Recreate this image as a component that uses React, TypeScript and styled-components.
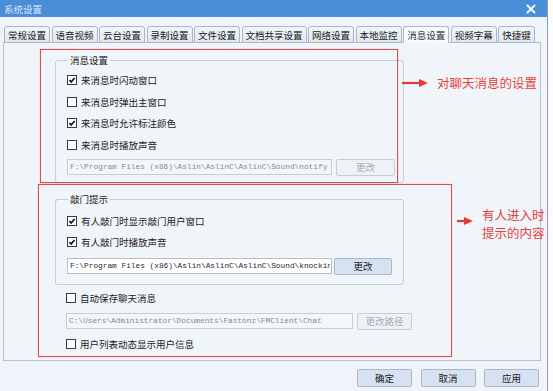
import React from 'react';
import styled, { createGlobalStyle } from 'styled-components';

const GlobalStyle = createGlobalStyle`
  *, *::before, *::after { box-sizing: border-box; }
  html, body { margin: 0; padding: 0; background: #fbfbfb; }
  body {
    font-family: "Noto Sans CJK SC", "Noto Sans", sans-serif;
    font-size: 9.5px;
    line-height: 12px;
    color: #1b1b1b;
  }
`;

const tabs = ['常规设置', '语音视频', '云台设置', '录制设置', '文件设置', '文档共享设置', '网络设置', '本地监控', '消息设置', '视频字幕', '快捷键'];

const Check: React.FC<{ checked?: boolean }> = ({ checked }) => (
  <Box>
    {checked && (
      <svg width="8" height="8" viewBox="0 0 8 8">
        <path d="M1.4 4.1 L3.2 5.9 L6.6 2" fill="none" stroke="#1a1a1a" strokeWidth="1.7" />
      </svg>
    )}
  </Box>
);

const Option: React.FC<{ checked?: boolean; label: string; top?: number }> = ({ checked, label, top }) => (
  <CheckRow $top={top}>
    <Check checked={checked} />
    <span>{label}</span>
  </CheckRow>
);

const Arrow: React.FC<{ len: number }> = ({ len }) => (
  <svg width={len + 2} height="10" viewBox={`0 0 ${len + 2} 10`}>
    <line x1="1" y1="5" x2={len - 6} y2="5" stroke="#e53a3a" strokeWidth="2.2" />
    <polygon points={`${len - 8},1 ${len + 1},5 ${len - 8},9`} fill="#e53a3a" />
  </svg>
);

const App: React.FC = () => {
  return (
    <Window>
      <GlobalStyle />
      <TitleBar>
        <span>系统设置</span>
        <svg width="10" height="10" viewBox="0 0 10 10">
          <path d="M1 1 L9 9 M9 1 L1 9" stroke="#ffffff" strokeWidth="1.8" />
        </svg>
      </TitleBar>

      <TabRow>
        {tabs.map((t) => (
          <Tab key={t} $active={t === '消息设置'}>{t}</Tab>
        ))}
      </TabRow>

      <Panel>
        <Group $top={0} $pt={13} $pb={6}>
          <GroupTitle>消息设置</GroupTitle>
          <Option checked label="来消息时闪动窗口" />
          <Option label="来消息时弹出主窗口" top={9.7} />
          <Option checked label="来消息时允许标注颜色" top={9.7} />
          <Option label="来消息时播放声音" top={9.7} />
          <PathRow $top={7} $gap={4}>
            <PathInput $w={265} disabled readOnly value={'F:\\Program Files (x86)\\Aslin\\AslinC\\AslinC\\Sound\\notify'} />
            <Button $w={59} disabled>更改</Button>
          </PathRow>
        </Group>

        <Group $top={16} $pt={15} $pb={9}>
          <GroupTitle>敲门提示</GroupTitle>
          <Option checked label="有人敲门时显示敲门用户窗口" />
          <Option checked label="有人敲门时播放声音" top={8.5} />
          <PathRow $top={9.5} $gap={2}>
            <PathInput $w={265} readOnly value={'F:\\Program Files (x86)\\Aslin\\AslinC\\AslinC\\Sound\\knocking.wav'} />
            <Button $w={58}>更改</Button>
          </PathRow>
        </Group>

        <Section>
          <Option label="自动保存聊天消息" />
          <PathRow $top={8} $gap={4}>
            <PathInput $w={287} disabled readOnly value={'C:\\Users\\Administrator\\Documents\\Fastonz\\FMClient\\Chat'} />
            <Button $w={55} disabled>更改路径</Button>
          </PathRow>
          <Option label="用户列表动态显示用户信息" top={8} />
        </Section>
      </Panel>

      <Footer>
        <Button $w={55} $h={18}>确定</Button>
        <Button $w={55} $h={18}>取消</Button>
        <Button $w={55} $h={18}>应用</Button>
      </Footer>

      <RedBox $x={40} $y={49} $w={358} $h={134} />
      <RedBox $x={38} $y={184} $w={414} $h={173} />

      <Note $x={401} $y={74}>
        <Arrow len={26} />
        <NoteText>对聊天消息的设置</NoteText>
      </Note>
      <Note $x={456} $y={206}>
        <ArrowSlot>
          <Arrow len={16} />
        </ArrowSlot>
        <NoteText>
          有人进入时
          <br />
          提示的内容
        </NoteText>
      </Note>
    </Window>
  );
};

const Window = styled.div`
  position: relative;
  width: 548px;
  height: 391px;
  border-right: 1px solid #8e9cab;
  background: #eef4fa;
  display: flex;
  flex-direction: column;
  overflow: hidden;
`;

const TitleBar = styled.div`
  height: 17px;
  flex-shrink: 0;
  background: #4a8ed8;
  color: #d6e5f6;
  display: flex;
  align-items: center;
  justify-content: space-between;
  padding: 0 11px 0 4px;
`;

const TabRow = styled.div`
  display: flex;
  gap: 1.5px;
  margin-top: 9px;
  margin-bottom: -1px;
  padding-left: 4px;
  height: 17px;
  position: relative;
  z-index: 1;
`;

const Tab = styled.div<{ $active?: boolean }>`
  height: 17px;
  padding: 0 3px;
  border: 1px solid #aab7c5;
  border-bottom-color: ${(p) => (p.$active ? '#f4f8fc' : '#aab7c5')};
  border-radius: 3px 3px 0 0;
  background: ${(p) => (p.$active ? '#f8fbfe' : 'linear-gradient(#f2f6fa, #e1e8f0)')};
  color: ${(p) => (p.$active ? '#333' : '#1b1b1b')};
  display: flex;
  align-items: center;
  white-space: nowrap;
`;

const Panel = styled.div`
  margin-left: 3px;
  width: 538px;
  height: 319px;
  flex-shrink: 0;
  border: 1px solid #b5c1cd;
  background: #f0f5fa;
  padding: 17px 0 0 51px;
  display: flex;
  flex-direction: column;
`;

const Group = styled.div<{ $top: number; $pt: number; $pb: number }>`
  position: relative;
  width: 349px;
  margin-top: ${(p) => p.$top}px;
  border: 1px solid #c5cfd9;
  border-radius: 3px;
  padding: ${(p) => p.$pt}px 6px ${(p) => p.$pb}px 11px;
  display: flex;
  flex-direction: column;
`;

const GroupTitle = styled.span`
  position: absolute;
  top: -7px;
  left: 12px;
  padding: 0 2px;
  background: #f0f5fa;
  color: #222;
`;

const Section = styled.div`
  padding: 7px 0 0 11px;
  display: flex;
  flex-direction: column;
`;

const CheckRow = styled.div<{ $top?: number }>`
  display: flex;
  align-items: center;
  gap: 4px;
  height: 12px;
  margin-top: ${(p) => p.$top ?? 0}px;
  white-space: nowrap;
`;

const Box = styled.span`
  width: 10px;
  height: 10px;
  border: 1px solid #3a3a3a;
  background: #ffffff;
  display: flex;
  align-items: center;
  justify-content: center;
  flex-shrink: 0;
`;

const PathRow = styled.div<{ $top: number; $gap: number }>`
  display: flex;
  align-items: center;
  gap: ${(p) => p.$gap}px;
  height: 18px;
  margin-top: ${(p) => p.$top}px;
`;

const PathInput = styled.input<{ $w: number }>`
  width: ${(p) => p.$w}px;
  height: 16px;
  margin: 0;
  padding: 0 1px 0 2px;
  border: 1px solid #b3bfcb;
  background: #ffffff;
  font-family: "Liberation Mono", "DejaVu Sans Mono", monospace;
  font-size: 7.8px;
  color: #2a2a2a;
  outline: none;

  &:disabled {
    background: #f4f7fa;
    border-color: #c6ced6;
    color: #8a8a8a;
  }
`;

const Button = styled.button<{ $w: number; $h?: number }>`
  width: ${(p) => p.$w}px;
  height: ${(p) => p.$h ?? 17}px;
  margin: 0;
  padding: 0;
  border: 1px solid #a9b9cc;
  border-radius: 2px;
  background: #d6e2f1;
  font-family: "Noto Sans CJK SC", "Noto Sans", sans-serif;
  font-size: 9.5px;
  line-height: 12px;
  color: #1b1b1b;

  &:disabled {
    background: #eef2f6;
    border-color: #c7ced6;
    color: #a4adb6;
  }
`;

const Footer = styled.div`
  display: flex;
  justify-content: flex-end;
  gap: 8.5px;
  padding-right: 8px;
  margin-top: 8px;
`;

const RedBox = styled.div<{ $x: number; $y: number; $w: number; $h: number }>`
  position: absolute;
  left: ${(p) => p.$x}px;
  top: ${(p) => p.$y}px;
  width: ${(p) => p.$w}px;
  height: ${(p) => p.$h}px;
  border: 1px solid #de4b4e;
  box-shadow: 0 0 1px rgba(222, 75, 78, 0.45);
  pointer-events: none;
`;

const Note = styled.div<{ $x: number; $y: number }>`
  position: absolute;
  left: ${(p) => p.$x}px;
  top: ${(p) => p.$y}px;
  display: flex;
  align-items: center;
  gap: 8px;
`;

const ArrowSlot = styled.div`
  align-self: flex-start;
  padding-top: 10px;
  display: flex;
`;

const NoteText = styled.span`
  color: #e5413d;
  font-size: 12.5px;
  line-height: 18px;
  white-space: nowrap;
`;

export default App;
